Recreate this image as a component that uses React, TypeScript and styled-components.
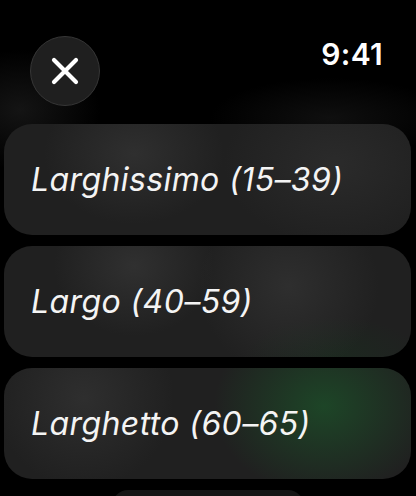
import styled, {createGlobalStyle} from "styled-components";

const GlobalStyle = createGlobalStyle`
  html, body {
    margin: 0;
    padding: 0;
    background: #000;
  }
  body {
    font-family: Inter, "Noto Sans", sans-serif;
    color: #fff;
  }
`;

type Tempo = {
  label: string;
  glow: string;
};

const tempos: Tempo[] = [
  {
    label: "Larghissimo (15–39)",
    glow:
      "radial-gradient(ellipse 90px 70px at 130px 30px, rgba(62,62,62,0.5), transparent), radial-gradient(ellipse 110px 80px at 330px 40px, rgba(56,56,56,0.45), transparent)",
  },
  {
    label: "Largo (40–59)",
    glow:
      "radial-gradient(ellipse 80px 70px at 130px 20px, rgba(64,64,64,0.5), transparent), radial-gradient(ellipse 90px 90px at 285px 40px, rgba(64,64,64,0.45), transparent), radial-gradient(ellipse 90px 40px at 330px 111px, rgba(20,60,30,0.3), transparent)",
  },
  {
    label: "Larghetto (60–65)",
    glow:
      "radial-gradient(ellipse 110px 90px at 320px 38px, rgba(28,85,42,0.7), transparent), radial-gradient(ellipse 90px 90px at 80px 30px, rgba(64,64,64,0.45), transparent)",
  },
];

const CloseIcon = () => (
  <svg width="28" height="28" viewBox="0 0 28 28" fill="none">
    <path
      d="M3 3 L25 25 M25 3 L3 25"
      stroke="#fff"
      strokeWidth="4.2"
      strokeLinecap="round"
    />
  </svg>
);

const App = () => {
  return (
    <>
      <GlobalStyle />
      <Screen>
        <Header>
          <CloseButton aria-label="Close">
            <CloseIcon />
          </CloseButton>
          <Time>9:41</Time>
        </Header>
        <List>
          {tempos.map((t) => (
            <Card key={t.label} style={{backgroundImage: t.glow}}>
              <Label>{t.label}</Label>
            </Card>
          ))}
          <PeekCard />
        </List>
      </Screen>
    </>
  );
};

const Screen = styled.div`
  width: 416px;
  height: 496px;
  overflow: hidden;
  background:
    radial-gradient(ellipse 80px 60px at 20px 110px, rgba(40,40,40,0.5), transparent),
    radial-gradient(ellipse 120px 40px at 330px 118px, rgba(30,30,30,0.5), transparent),
    #000;
`;

const Header = styled.div`
  display: flex;
  align-items: flex-start;
  justify-content: space-between;
  padding: 36px 33px 0 30px;
  height: 88px;
`;

const CloseButton = styled.button`
  width: 70px;
  height: 70px;
  border-radius: 50%;
  background: #1f1f1f;
  border: 1.5px solid #363636;
  display: flex;
  align-items: center;
  justify-content: center;
  padding: 0;
  box-sizing: border-box;
`;

const Time = styled.div`
  font-size: 30px;
  font-weight: 600;
  line-height: 1;
  margin-top: 3px;
  letter-spacing: 0.3px;
`;

const List = styled.div`
  display: flex;
  flex-direction: column;
  align-items: center;
  gap: 11px;
  padding: 0 5px 0 4px;
`;

const Card = styled.div`
  width: 100%;
  height: 111px;
  box-sizing: border-box;
  border-radius: 28px;
  background-color: #202020;
  display: flex;
  align-items: center;
  padding-left: 27px;
`;

const Label = styled.span`
  font-size: 32px;
  font-style: italic;
  font-weight: 400;
  letter-spacing: 0.4px;
  color: #f4f4f4;
`;

const PeekCard = styled.div`
  width: 192px;
  height: 40px;
  border-radius: 16px;
  background: #151515;
`;

export default App;
